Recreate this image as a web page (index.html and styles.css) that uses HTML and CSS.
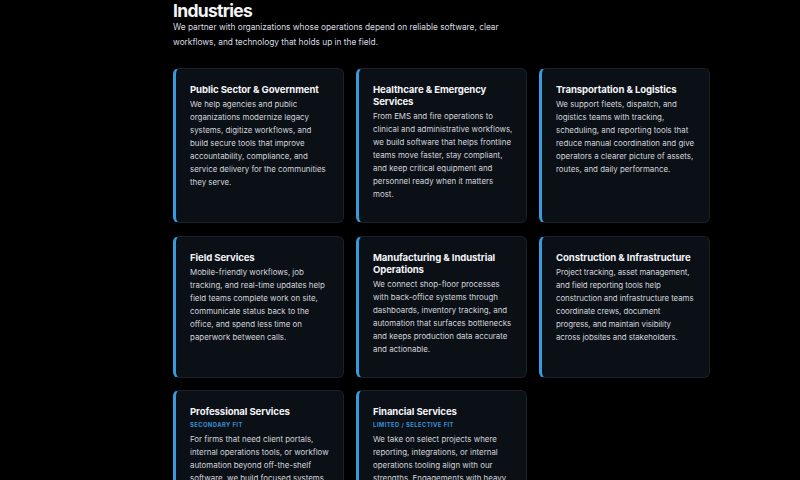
FILE: index.html
```html
<!DOCTYPE html>
<html>
<head>
<meta charset="utf-8">
<link rel="stylesheet" href="styles.css">
</head>
<body>
<section class="industries">
  <h1 class="title">Industries</h1>
  <p class="lead">We partner with organizations whose operations depend on reliable software, clear workflows, and technology that holds up in the field.</p>
  <div class="grid">
    <div class="card">
      <h2 class="card-title">Public Sector &amp; Government</h2>
      <p class="card-body">We help agencies and public organizations modernize legacy systems, digitize workflows, and build secure tools that improve accountability, compliance, and service delivery for the communities they serve.</p>
    </div>
    <div class="card">
      <h2 class="card-title">Healthcare &amp; Emergency Services</h2>
      <p class="card-body">From EMS and fire operations to clinical and administrative workflows, we build software that helps frontline teams move faster, stay compliant, and keep critical equipment and personnel ready when it matters most.</p>
    </div>
    <div class="card">
      <h2 class="card-title">Transportation &amp; Logistics</h2>
      <p class="card-body">We support fleets, dispatch, and logistics teams with tracking, scheduling, and reporting tools that reduce manual coordination and give operators a clearer picture of assets, routes, and daily performance.</p>
    </div>
    <div class="card">
      <h2 class="card-title">Field Services</h2>
      <p class="card-body">Mobile-friendly workflows, job tracking, and real-time updates help field teams complete work on site, communicate status back to the office, and spend less time on paperwork between calls.</p>
    </div>
    <div class="card">
      <h2 class="card-title">Manufacturing &amp; Industrial Operations</h2>
      <p class="card-body">We connect shop-floor processes with back-office systems through dashboards, inventory tracking, and automation that surfaces bottlenecks and keeps production data accurate and actionable.</p>
    </div>
    <div class="card">
      <h2 class="card-title">Construction &amp; Infrastructure</h2>
      <p class="card-body tight">Project tracking, asset management, and field reporting tools help construction and infrastructure teams coordinate crews, document progress, and maintain visibility across jobsites and stakeholders.</p>
    </div>
    <div class="card">
      <h2 class="card-title">Professional Services</h2>
      <div class="tag">Secondary fit</div>
      <p class="card-body">For firms that need client portals, internal operations tools, or workflow automation beyond off-the-shelf software, we build focused systems that fit the way your team already works.</p>
    </div>
    <div class="card">
      <h2 class="card-title">Financial Services</h2>
      <div class="tag">Limited / selective fit</div>
      <p class="card-body">We take on select projects where reporting, integrations, or internal operations tooling align with our strengths. Engagements with heavy regulatory requirements are evaluated case by case.</p>
    </div>
  </div>
</section>
</body>
</html>
```
FILE: styles.css
```css
html, body {
  margin: 0;
  padding: 0;
  background: #000;
  color: #e6e8eb;
  font-family: Inter, "Noto Sans", sans-serif;
  overflow: hidden;
  height: 480px;
}
.industries {
  width: 537px;
  margin-left: 173px;
}
.title {
  margin: 0;
  padding-top: 1px;
  font-size: 17.5px;
  line-height: 19px;
  font-weight: 700;
  color: #f3f4f6;
  letter-spacing: -0.7px;
}
.lead {
  margin: 0 0 18px 0;
  font-size: 8.3px;
  line-height: 15px;
  color: #d9dce0;
  max-width: 340px;
}
.grid {
  display: grid;
  grid-template-columns: repeat(3, 1fr);
  column-gap: 12px;
  row-gap: 12.5px;
}
.card {
  background: #0b0f16;
  border: 1px solid #1a212b;
  border-left: 3px solid #3a9bdc;
  border-radius: 6px;
  padding: 15px 13px 21px 14px;
}
.card-title {
  margin: 0 0 2px 0;
  font-size: 9.6px;
  line-height: 12px;
  font-weight: 700;
  color: #f3f4f6;
  letter-spacing: -0.1px;
}
.tag {
  margin: 0 0 4px 0;
  font-size: 5.8px;
  line-height: 9px;
  font-weight: 700;
  letter-spacing: 0.45px;
  text-transform: uppercase;
  color: #3a8fd4;
}
.card-body {
  margin: 0;
  font-size: 7.9px;
  line-height: 13px;
  color: #d3d6db;
}
.card-body.tight {
  letter-spacing: -0.08px;
}
```
